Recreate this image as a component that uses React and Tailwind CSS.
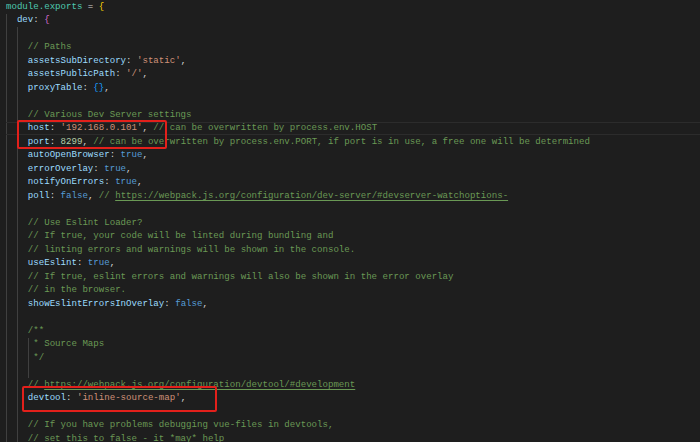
const C = {
  k: "text-[#9cdcfe]",
  p: "text-[#d4d4d4]",
  s: "text-[#ce9178]",
  b: "text-[#569cd6]",
  n: "text-[#b5cea8]",
  c: "text-[#6a9955]",
  u: "text-[#6a9955] underline underline-offset-2",
  m: "text-[#4ec9b0]",
  y: "text-[#ffd700]",
  pk: "text-[#da70d6]",
  bl: "text-[#179fff]",
};

// [guides, tokens, extra]
const lines = [
  [0, [["m", "module.exports"], ["p", " = "], ["y", "{"]]],
  [1, [["k", "dev"], ["p", ": "], ["pk", "{"]]],
  [2, []],
  [2, [["c", "// Paths"]]],
  [2, [["k", "assetsSubDirectory"], ["p", ": "], ["s", "'static'"], ["p", ","]]],
  [2, [["k", "assetsPublicPath"], ["p", ": "], ["s", "'/'"], ["p", ","]]],
  [2, [["k", "proxyTable"], ["p", ": "], ["bl", "{}"], ["p", ","]]],
  [2, []],
  [2, [["c", "// Various Dev Server settings"]]],
  [2, [["k", "host"], ["p", ": "], ["s", "'192.168.0.101'"], ["p", ", "], ["c", "// can be overwritten by process.env.HOST"]], "current"],
  [2, [["k", "port"], ["p", ": "], ["n", "8299"], ["p", ", "], ["c", "// can be overwritten by process.env.PORT, if port is in use, a free one will be determined"]]],
  [2, [["k", "autoOpenBrowser"], ["p", ": "], ["b", "true"], ["p", ","]]],
  [2, [["k", "errorOverlay"], ["p", ": "], ["b", "true"], ["p", ","]]],
  [2, [["k", "notifyOnErrors"], ["p", ": "], ["b", "true"], ["p", ","]]],
  [2, [["k", "poll"], ["p", ": "], ["b", "false"], ["p", ", "], ["c", "// "], ["u", "https://webpack.js.org/configuration/dev-server/#devserver-watchoptions-"]]],
  [2, []],
  [2, [["c", "// Use Eslint Loader?"]]],
  [2, [["c", "// If true, your code will be linted during bundling and"]]],
  [2, [["c", "// linting errors and warnings will be shown in the console."]]],
  [2, [["k", "useEslint"], ["p", ": "], ["b", "true"], ["p", ","]]],
  [2, [["c", "// If true, eslint errors and warnings will also be shown in the error overlay"]]],
  [2, [["c", "// in the browser."]]],
  [2, [["k", "showEslintErrorsInOverlay"], ["p", ": "], ["b", "false"], ["p", ","]]],
  [2, []],
  [2, [["c", "/**"]]],
  [2, [["c", "* Source Maps"]], "block"],
  [2, [["c", "*/"]], "block"],
  [2, [], "block"],
  [2, [["c", "// "], ["u", "https://webpack.js.org/configuration/devtool/#development"]]],
  [2, [["k", "devtool"], ["p", ": "], ["s", "'inline-source-map'"], ["p", ","]]],
  [2, []],
  [2, [["c", "// If you have problems debugging vue-files in devtools,"]]],
  [2, [["c", "// set this to false - it *may* help"]]],
];

const CodeLine = ({ guides, tokens, extra }) => (
  <div
    className={`flex h-[13.5px] items-center whitespace-pre ${extra === "current" ? "border-y border-[#2c2c2c]" : ""}`}
  >
    {/* Indent guides */}
    {Array.from({ length: guides }).map((_, i) => (
      <span key={i} className="h-full w-[2ch] shrink-0 border-l border-[#404040]" />
    ))}
    {/* comment block continuation guide sits on the leading space */}
    {extra === "block" && (
      <span className="h-full w-[1ch] shrink-0 border-l border-[#404040]" />
    )}
    {tokens.map(([t, text], i) => (
      <span key={i} className={C[t]}>{text}</span>
    ))}
  </div>
);

export default function App() {
  return (
    <div className="relative h-[442px] w-[700px] overflow-hidden bg-[#1e1e1e] font-['Liberation_Mono',monospace] text-[9.1px]">
      <div className="pl-[6px]">
        {lines.map(([g, tokens, extra], i) => (
          <CodeLine key={i} guides={g} tokens={tokens} extra={extra} />
        ))}
      </div>

      {/* Red annotation boxes */}
      <div className="absolute left-[17px] top-[120px] h-[29px] w-[150px] rounded-[2px] border-2 border-[#e3201b]" />
      <div className="absolute left-[22px] top-[386px] h-[26px] w-[195px] rounded-[2px] border-2 border-[#e3201b]" />
    </div>
  );
}
